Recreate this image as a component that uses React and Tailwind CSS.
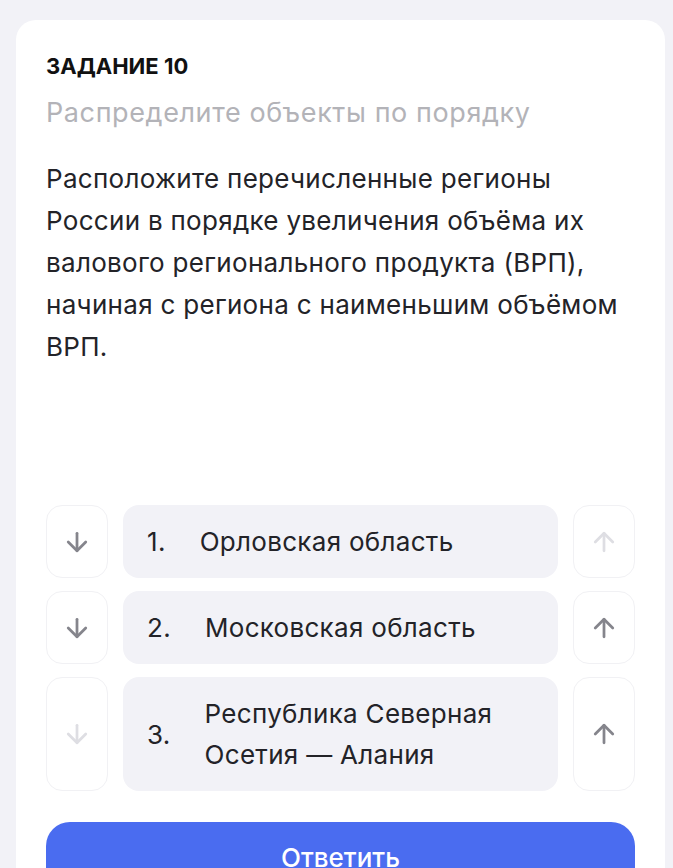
import { ArrowDown, ArrowUp } from "lucide-react";

const items = [
  { n: "1.", text: "Орловская область", down: true, up: false },
  { n: "2.", text: "Московская область", down: true, up: true },
  { n: "3.", text: "Республика Северная Осетия — Алания", down: false, up: true },
];

const ArrowBtn = ({ dir, active }) => {
  const Icon = dir === "down" ? ArrowDown : ArrowUp;
  return (
    <button className="w-[62px] shrink-0 rounded-[16px] border border-[#f1f1f4] bg-white flex items-center justify-center">
      <Icon size={30} strokeWidth={2.2} className={active ? "text-[#85858c]" : "text-[#dedee3]"} />
    </button>
  );
};

const App = () => {
  return (
    <div className="h-[868px] overflow-hidden bg-[#f2f2f7] pt-5 pl-4 pr-2 font-['Inter','Noto_Sans',sans-serif]">
      <div className="bg-white rounded-[20px] px-[30px] pt-[32px] pb-10">
        <h2 className="text-[22px] font-bold tracking-[0px] text-[#111] leading-[28px]">ЗАДАНИЕ 10</h2>
        <p className="mt-[17px] text-[27px] text-[#b3b3b8] leading-[32px] tracking-[0.6px]">Распределите объекты по порядку</p>
        <p className="mt-[29px] text-[26px] leading-[42px] text-[#232328] tracking-[0.3px]">
          Расположите перечисленные регионы России в порядке увеличения объёма их валового регионального продукта (ВРП), начиная с региона с наименьшим объёмом ВРП.
        </p>
        <div className="mt-[137px] flex flex-col gap-[13px]">
          {items.map((it) => (
            <div key={it.n} className="flex gap-[15px] items-stretch">
              <ArrowBtn dir="down" active={it.down} />
              <div className="flex-1 bg-[#f2f2f7] rounded-[16px] py-4 pl-6 pr-6 flex items-center gap-[34px] text-[26px] leading-[41px] text-[#232328] tracking-[0.3px]">
                <span className="shrink-0">{it.n}</span>
                <span>{it.text}</span>
              </div>
              <ArrowBtn dir="up" active={it.up} />
            </div>
          ))}
        </div>
        <button className="mt-[31px] w-full h-[70px] rounded-[24px] bg-[#4a6cf0] text-white text-[26px] font-medium">
          Ответить
        </button>
      </div>
    </div>
  );
};

export default App;
